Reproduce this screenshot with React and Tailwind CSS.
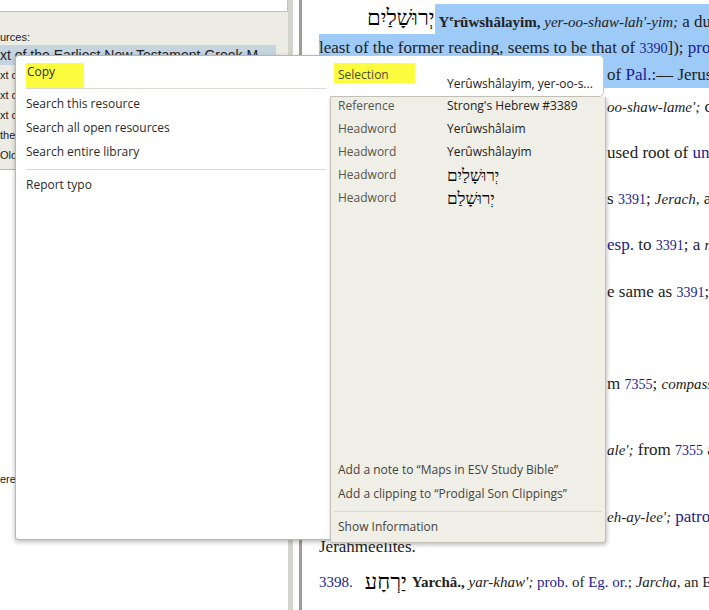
import React from "react";

const link = "text-[#1b1b92]";
const num = "text-[#1b1b92] text-[14px]";

const App = () => {
  return (
    <div className="relative w-[709px] h-[610px] overflow-hidden flex bg-white">
      {/* Left resource panel */}
      <aside className="w-[288px] shrink-0 flex flex-col font-['Liberation_Sans',sans-serif] text-[11px] text-[#222]">
        <div className="h-[12px] bg-white border-b border-r border-[#c3c1b6]" />
        <div className="h-[158px] bg-[#edece4] border-b border-[#b8b6aa]">
          <div className="pt-[17px] leading-[16px] whitespace-nowrap">urces:</div>
          <div className="w-[276px] h-[20px] leading-[20px] text-[14px] bg-[#c6d4df] whitespace-nowrap overflow-hidden">
            xt of the Earliest New Testament Greek M
          </div>
          <div className="h-[20px] leading-[20px] whitespace-nowrap overflow-hidden">xt of the Old Testament</div>
          <div className="h-[20px] leading-[20px] whitespace-nowrap overflow-hidden">xt criticism</div>
          <div className="h-[20px] leading-[20px] whitespace-nowrap overflow-hidden">xt commentary</div>
          <div className="h-[20px] leading-[20px] whitespace-nowrap overflow-hidden">the Septuagint</div>
          <div className="h-[20px] leading-[20px] whitespace-nowrap overflow-hidden">Old Testament</div>
        </div>
        <div className="flex-1 bg-white pt-[301px] leading-[16px] whitespace-nowrap">ere</div>
      </aside>

      {/* Splitter */}
      <div className="w-[5px] shrink-0 bg-[#d5d4cc]" />
      <div className="w-[6px] shrink-0 bg-white" />
      <div className="w-[3px] shrink-0 bg-[#9e9d95]" />

      {/* Document */}
      <main className="flex-1 pl-[17px] pt-[4px] font-['Liberation_Serif',serif] text-[17px] leading-[28px] text-[#222] whitespace-nowrap overflow-hidden">
        <div className="h-[30px] flex items-start pl-[48px]">
          <span dir="rtl" className="text-[22px] leading-[28px] text-black">יְרוּשָׁלַיִם</span>
          <span className="self-stretch bg-[#9dcaf7] pl-[4px] pr-[200px]">
            <b className="text-[15px]">
              Y<span className="text-[9px] align-super">e</span>rûwshâlayim,
            </b>
            <i className="text-[15px]"> yer-oo-shaw-lah'-yim;</i> a dual (in allusion to its two main hills
          </span>
        </div>
        <div className="h-[27px] bg-[#9dcaf7] leading-[28px]">
          least of the former reading, seems to be that of <span className={num}>3390</span>]);{" "}
          <span className={link}>probably</span> from
        </div>
        <div className="h-[32px]">
          <div className="h-[27px] bg-[#9dcaf7] flex">
            <span className="w-[288px] shrink-0">participle of) 3384; the capital </span>
            <span>
              of <span className={link}>Pal.</span>:— Jerusalem.
            </span>
          </div>
        </div>
        <div className="h-[46px] flex">
          <span className="w-[288px] shrink-0">3390. יְרוּשְׁלֵם Yᵉrûwshᵉlêm, yer-</span>
          <span>
            <i className="text-[15px]">oo-shaw-lame';</i> corresp. to 3389
          </span>
        </div>
        <div className="h-[46px] flex">
          <span className="w-[288px] shrink-0">3391. יֶרַח yerach, from an un</span>
          <span>
            used root of <span className={link}>uncert. signif.</span>
          </span>
        </div>
        <div className="h-[46px] flex">
          <span className="w-[288px] shrink-0">3392. יֶרַח Yerach, the same a</span>
          <span>
            s <span className={num}>3391</span>; <i className="text-[15px]">Jerach,</i> an Arabian
          </span>
        </div>
        <div className="h-[47px] flex">
          <span className="w-[288px] shrink-0">3393. יְרַח yᵉrach (Chald.), corr</span>
          <span>
            <span className={link}>esp.</span> to <span className={num}>3391</span>; a{" "}
            <i className="text-[15px]">month</i>
          </span>
        </div>
        <div className="h-[46px] flex">
          <span className="w-[288px] shrink-0">3394. יָרֵחַ yârêach, from th</span>
          <span>
            e same as <span className={num}>3391</span>; the moon
          </span>
        </div>
        <div className="h-[46px]">Yᵉrêchôw. See 3405.</div>
        <div className="h-[66px] flex">
          <span className="w-[288px] shrink-0">3395. יְרֹחָם Yᵉrôchâm, fro</span>
          <span>
            m <span className={num}>7355</span>; <i className="text-[15px]">compassionate;</i>
          </span>
        </div>
        <div className="h-[67px] flex">
          <span className="w-[288px] shrink-0">3396. יְרַחְמְאֵל Yᵉrachmᵉʼêl, </span>
          <span>
            <i className="text-[15px]">ale';</i> from <span className={num}>7355</span> and 410
          </span>
        </div>
        <div className="h-[30px] flex">
          <span className="w-[288px] shrink-0">3397. יְרַחְמְאֵלִי Yᵉrachmᵉʼêlîy, </span>
          <span>
            <i className="text-[15px]">eh-ay-lee';</i> <span className={link}>patronymic</span>
          </span>
        </div>
        <div className="h-[35px]">Jerahmeelites.</div>
        <div className="h-[28px] flex items-start text-[15px]">
          <span className={link}>3398.</span>
          <span dir="rtl" className="ml-[12px] text-[22px] leading-[28px] text-black">יַרְחָע</span>
          <span className="ml-[5px]">
            <b>Yarchâ.,</b> <i>yar-khaw';</i> <span className={link}>prob.</span> of{" "}
            <span className={link}>Eg. or.</span>; <i>Jarcha,</i> an Eg.
          </span>
        </div>
      </main>

      {/* Context menu */}
      <div className="absolute left-[15px] top-[55px] flex items-start font-['Open_Sans',sans-serif] text-[12px]">
        <div className="w-[315px] h-[485px] bg-white border border-r-0 border-[#b9b7ab] rounded-l-[3px] shadow-[0_2px_5px_rgba(0,0,0,0.28)] pl-[10px] pr-[4px] text-[#2a2a2a]">
          <div className="mt-[7px] w-[58px] h-[25px] bg-[#fdfc3f] pl-[1px] leading-[18px]">Copy</div>
          <div className="h-px bg-[#dcdad0]" />
          <div className="mt-[3px] h-[24px] leading-[24px]">Search this resource</div>
          <div className="h-[24px] leading-[24px]">Search all open resources</div>
          <div className="h-[24px] leading-[24px]">Search entire library</div>
          <div className="mt-[5px] h-px bg-[#dcdad0]" />
          <div className="mt-[3px] h-[24px] leading-[24px]">Report typo</div>
        </div>

        <div className="w-[276px] flex flex-col">
          <div className="h-[42px] mr-[2px] bg-white border-t border-r border-b border-[#c9c6ba] rounded-r-[5px] flex items-start">
            <div className="ml-[4px] mt-[7px] w-[81px] h-[20px] bg-[#fdfc3f] pl-[4px] pt-[3px] leading-[18px] text-[#4a4a40]">
              Selection
            </div>
            <div className="ml-[32px] mt-[19px] leading-[18px] text-[#222] whitespace-nowrap">
              Yerûwshâlayim, yer-oo-s...
            </div>
          </div>
          <div className="h-[446px] bg-[#f0efe7] border-l border-r border-b border-[#c3c1b5] rounded-b-[3px] shadow-[1px_2px_4px_rgba(0,0,0,0.25)] flex flex-col">
            {[
              ["Reference", "Strong's Hebrew #3389", false],
              ["Headword", "Yerûwshâlaim", false],
              ["Headword", "Yerûwshâlayim", false],
              ["Headword", "יְרוּשָׁלַיִם", true],
              ["Headword", "יְרוּשָׁלַם", true],
            ].map(([label, value, heb], i) => (
              <div key={i} className="h-[23px] flex leading-[18px] whitespace-nowrap">
                <span className="w-[116px] shrink-0 pl-[7px] text-[#55554c]">{label}</span>
                {heb ? (
                  <span dir="rtl" className="font-['Liberation_Serif',serif] text-[17px] leading-[20px] text-black">
                    {value}
                  </span>
                ) : (
                  <span className="text-[#222]">{value}</span>
                )}
              </div>
            ))}
            <div className="mt-auto text-[#44443c] whitespace-nowrap">
              <div className="h-[24px] leading-[24px] pl-[7px]">Add a note to “Maps in ESV Study Bible”</div>
              <div className="h-[24px] leading-[24px] pl-[7px]">Add a clipping to “Prodigal Son Clippings”</div>
              <div className="mt-[5px] mx-[3px] h-px bg-[#dcdad0]" />
              <div className="mt-[3px] mb-[3px] h-[24px] leading-[24px] pl-[7px]">Show Information</div>
            </div>
          </div>
        </div>
      </div>
    </div>
  );
};

export default App;
